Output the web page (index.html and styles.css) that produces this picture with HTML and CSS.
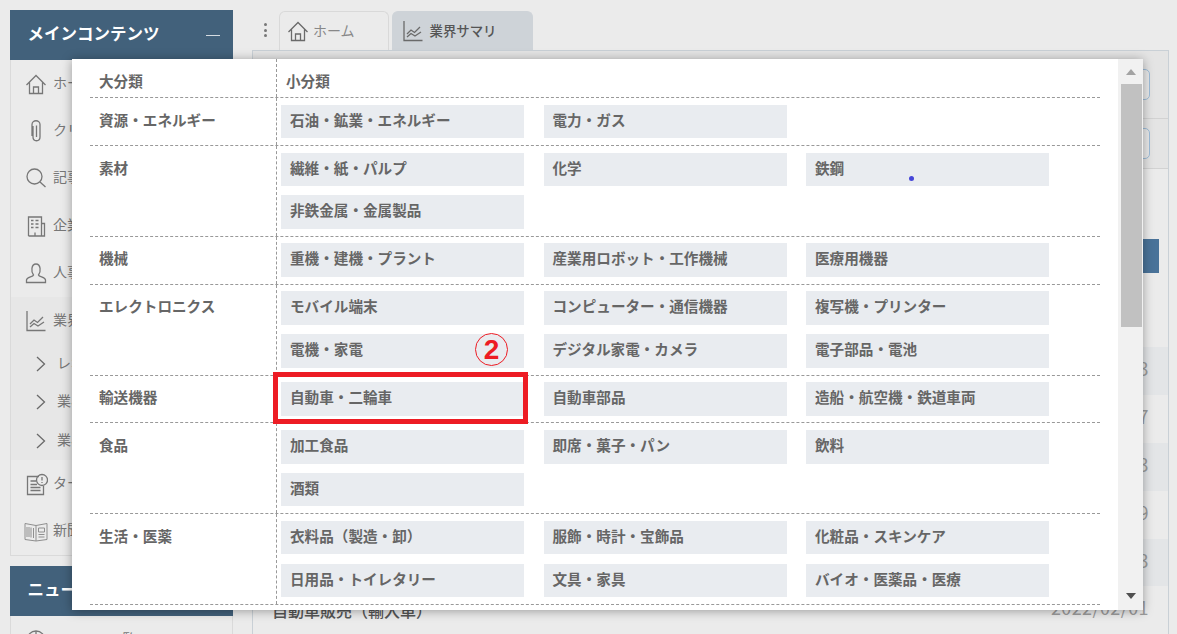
FILE: index.html
```html
<!DOCTYPE html>
<html lang="ja">
<head>
<meta charset="utf-8">
<title>業界サマリ</title>
<link rel="stylesheet" href="styles.css">
</head>
<body>
<div class="page">
  <aside class="sidebar">
    <section class="side-panel">
      <header class="side-head"><span class="title">メインコンテンツ</span><i class="minus"></i></header>
      <nav class="side-nav">
        <a class="item"><svg class="ico" viewBox="0 0 24 24"><path d="M2.500 13 12 3.500 21.500 13M5.500 10.500V21.500H18.500V10.500M9.500 21.500V15H14.500V21.500"/></svg><span class="label">ホーム</span></a>
        <a class="item"><svg class="ico" viewBox="0 0 24 24"><path d="M9 7V18C9 23 16 23 16 18V5.500C16 .5 8 .5 8 5.500V17M12.500 6.500V18"/></svg><span class="label">クリップ</span></a>
        <a class="item"><svg class="ico" viewBox="0 0 24 24"><circle cx="10.500" cy="10.500" r="7.500"/><path d="M16 16 21.500 21"/></svg><span class="label">記事検索</span></a>
        <a class="item"><svg class="ico" viewBox="0 0 24 24"><path d="M4.500 22V3H17.500V22M4.500 22H20.500V9.500H17.500M11 22V18.500M7 6.500H9.500M11.500 6.500H14.500M7 10H9.500M11.500 10H14.500M7 13.500H9.500M11.500 13.500H14.500"/></svg><span class="label">企業情報</span></a>
        <a class="item"><svg class="ico" viewBox="0 0 24 24"><path d="M2.500 21.500H21.500V19C21.500 16 15 16 14.500 14C17 11 17 3 12 3 7 3 7 11 9.500 14 9 16 2.500 16 2.500 19Z"/></svg><span class="label">人事情報</span></a>
        <div class="group">
          <a class="item"><svg class="ico" viewBox="0 0 24 24"><path d="M3 2V21.500H21.500M6 15 10 11 13.500 13.500 19 8M6 18 10 14.500 14 17 20 13"/></svg><span class="label">業界情報</span></a>
          <a class="sub"><svg class="chev" viewBox="0 0 10 16"><path d="M1 1 8.500 8 1 15"/></svg><span class="label">レポート一覧</span></a>
          <a class="sub"><svg class="chev" viewBox="0 0 10 16"><path d="M1 1 8.500 8 1 15"/></svg><span class="label">業界サマリ</span></a>
          <a class="sub"><svg class="chev" viewBox="0 0 10 16"><path d="M1 1 8.500 8 1 15"/></svg><span class="label">業界動向</span></a>
        </div>
        <a class="item"><svg class="ico" viewBox="0 0 24 24"><path d="M15 4.500H3.500V22.500H19.500V14M6.500 9H12M6.500 12.500H13M6.500 15.500H16.500M6.500 18.500H16.500"/><circle cx="18" cy="8" r="5.500"/><path d="M18 5V8.500M18 10V11"/></svg><span class="label">ターゲット</span></a>
        <a class="item"><svg class="ico news" viewBox="0 0 24 24"><path d="M1 4.500 12 6.500 23 4.500V20.500L12 22 1 20.500ZM12 6.500V22M3 8V18M5 8V18M7 8.500V18.500M9.500 9V19M14.500 9H20.500V13H14.500ZM14.500 15.500H20.500M14.500 18H20.500"/></svg><span class="label">新聞</span></a>
      </nav>
    </section>
    <section class="side-panel second">
      <header class="side-head"><span class="title">ニュース</span></header>
      <nav class="side-nav">
        <a class="item low"><svg class="ico" viewBox="0 0 24 24"><circle cx="12" cy="12" r="9"/><path d="M3 12H21M12 3V21"/></svg><span class="label">ニュース一覧</span></a>
      </nav>
    </section>
  </aside>

  <main class="content">
    <div class="tabs">
      <span class="more"><i></i><i></i><i></i></span>
      <a class="tab"><svg class="tab-ico" viewBox="0 0 24 24"><path d="M2.500 13 12 3.500 21.500 13M5.500 10.500V21.500H18.500V10.500M9.500 21.500V15H14.500V21.500"/></svg><span class="tab-label">ホーム</span></a>
      <a class="tab active"><svg class="tab-ico" viewBox="0 0 24 24"><path d="M3 2V21.500H21.500M6 15 10 11 13.500 13.500 19 8M6 18 10 14.500 14 17 20 13"/></svg><span class="tab-label">業界サマリ</span></a>
    </div>
    <div class="panel">
      <div class="filter first"><span class="field"></span></div>
      <div class="filter"><span class="field"></span></div>
      <div class="actions"><span class="button"></span></div>
      <ul class="list">
        <li class="row"><span>自動車販売（国内）</span><time>2022/03/03</time></li>
        <li class="row"><span>自動車生産</span><time>2022/02/27</time></li>
        <li class="row"><span>二輪車販売</span><time>2022/02/23</time></li>
        <li class="row"><span>自動車輸出</span><time>2022/02/19</time></li>
        <li class="row"><span>自動車部品</span><time>2022/02/03</time></li>
        <li class="row"><span>自動車販売（輸入車）</span><time>2022/02/01</time></li>
      </ul>
    </div>
  </main>
</div>

<div class="modal">
  <div class="modal-body">
    <div class="mrow head">
      <div class="major">大分類</div>
      <div class="minor">小分類</div>
    </div>
    <div class="mrow">
      <div class="major">資源・エネルギー</div>
      <div class="chips"><a class="chip">石油・鉱業・エネルギー</a><a class="chip">電力・ガス</a></div>
    </div>
    <div class="mrow">
      <div class="major">素材</div>
      <div class="chips"><a class="chip">繊維・紙・パルプ</a><a class="chip">化学</a><a class="chip">鉄鋼</a><a class="chip">非鉄金属・金属製品</a></div>
    </div>
    <div class="mrow">
      <div class="major">機械</div>
      <div class="chips"><a class="chip">重機・建機・プラント</a><a class="chip">産業用ロボット・工作機械</a><a class="chip">医療用機器</a></div>
    </div>
    <div class="mrow">
      <div class="major">エレクトロニクス</div>
      <div class="chips"><a class="chip">モバイル端末</a><a class="chip">コンピューター・通信機器</a><a class="chip">複写機・プリンター</a><a class="chip">電機・家電</a><a class="chip">デジタル家電・カメラ</a><a class="chip">電子部品・電池</a></div>
    </div>
    <div class="mrow">
      <div class="major">輸送機器</div>
      <div class="chips"><a class="chip">自動車・二輪車</a><a class="chip">自動車部品</a><a class="chip">造船・航空機・鉄道車両</a></div>
    </div>
    <div class="mrow">
      <div class="major">食品</div>
      <div class="chips"><a class="chip">加工食品</a><a class="chip">即席・菓子・パン</a><a class="chip">飲料</a><a class="chip">酒類</a></div>
    </div>
    <div class="mrow">
      <div class="major">生活・医薬</div>
      <div class="chips"><a class="chip">衣料品（製造・卸）</a><a class="chip">服飾・時計・宝飾品</a><a class="chip">化粧品・スキンケア</a><a class="chip">日用品・トイレタリー</a><a class="chip">文具・家具</a><a class="chip">バイオ・医薬品・医療</a></div>
    </div>
  </div>
  <div class="scrollbar">
    <i class="arrow up"></i>
    <i class="thumb"></i>
    <i class="arrow down"></i>
  </div>
</div>

<div class="mark-box"></div>
<div class="mark-num">2</div>
<i class="cursor-dot"></i>
</body>
</html>
```

FILE: styles.css
```css
* { box-sizing: border-box; }
html, body { margin: 0; height: 100%; overflow: hidden; }
body {
  background: #ebebeb;
  font-family: "Noto Sans CJK JP", "Noto Sans", sans-serif;
  color: #777;
  font-size: 14px;
}
a { display: block; }
i { display: block; }
ul { margin: 0; padding: 0; list-style: none; }

.page { display: flex; height: 634px; overflow: hidden; }

/* sidebar */
.sidebar { width: 233px; padding: 10px 0 0 10px; flex: none; }
.side-panel { border-left: 1px solid #dadada; border-bottom: 1px solid #dadada; border-right: 1px solid #dadada; }
.side-panel.second { margin-top: 10px; }
.side-head {
  height: 50px;
  margin: 0 -1px;
  background: #42617b;
  color: #fff;
  font-weight: 700;
  font-size: 16.5px;
  display: flex;
  align-items: center;
  justify-content: space-between;
  padding: 0 13px 0 17.500px;
}
.title { margin-top: -4px; }
.minus { width: 14px; height: 1.5px; background: #d5dce2; margin-top: 1px; }
.item { height: 47.4px; display: flex; align-items: center; padding-left: 13px; gap: 5px; white-space: nowrap; color: #777; }
.item.low { padding-top: 2px; }
.label { margin-top: -4px; }
.group { background: #e7e7e7; }
.sub { height: 38.5px; display: flex; align-items: center; padding-left: 25px; gap: 11px; white-space: nowrap; }
.ico { width: 24px; height: 24px; flex: none; fill: none; stroke: #777; stroke-width: 1.300; }
.ico.news { stroke: #8f8f8f; stroke-width: 1; }
.chev { width: 10px; height: 16px; flex: none; fill: none; stroke: #6a6a6a; stroke-width: 1.300; }

/* main */
.content { flex: 1; min-width: 0; padding: 11px 8px 0 19px; }
.tabs { display: flex; height: 39px; }
.more { width: 27px; display: flex; flex-direction: column; align-items: center; justify-content: center; gap: 2.500px; padding-bottom: 1px; }
.more i { width: 3px; height: 3px; border-radius: 50%; background: #777; }
.tab {
  width: 110px;
  border: 1px solid #d9d9d9;
  border-bottom: 0;
  border-radius: 6px 6px 0 0;
  display: flex;
  align-items: center;
  padding-left: 6px;
  gap: 3px;
  font-size: 14px;
  color: #888;
}
.tab.active {
  width: 141px;
  margin-left: 3px;
  background: #ced3d8;
  border-color: #ced3d8;
  color: #555;
  font-weight: 500;
  font-size: 13.4px;
  gap: 4.500px;
  padding-left: 8px;
}
.tab-label { margin-top: -2px; }
.tab-ico { width: 24px; height: 24px; flex: none; fill: none; stroke: #6a6a6a; stroke-width: 1.300; }
.panel { border: 1px solid #c9d0d6; border-bottom: 0; height: 584px; }
.filter { height: 50.500px; background: #e4e4e4; border-bottom: 1px solid #d2d2d2; display: flex; justify-content: flex-end; padding: 9px 18px 0 0; }
.filter.first { height: 67.500px; padding-top: 18px; }
.field { width: 200px; height: 31px; border: 1px solid #9dbcd8; border-radius: 5px; background: #e8e8e8; }
.actions { height: 178px; padding: 70px 9px 0 0; display: flex; justify-content: flex-end; align-items: flex-start; }
.button { width: 160px; height: 34px; background: #4a7399; }
.row {
  height: 47.900px;
  display: flex;
  align-items: center;
  justify-content: space-between;
  padding: 0 19px;
}
.row:nth-child(odd) { background: #e3e5e7; }
.row:last-child { background: none; }
.row span { font-size: 16px; font-weight: 500; color: #555; }
.row time { font-size: 18px; letter-spacing: .4px; color: #9c9c9c; line-height: 1; margin-top: -6px; }

/* category modal */
.modal {
  position: absolute;
  left: 72px;
  top: 59px;
  width: 1071px;
  height: 551px;
  background: #fff;
  display: flex;
  box-shadow: 0 1px 10px rgba(0, 0, 0, .35);
}
.modal-body { flex: 1; padding: 0 18px; min-width: 0; color: #666; font-weight: 700; font-size: 14.600px; }
.mrow { display: flex; border-bottom: 1px dashed #999; }
.mrow.head { height: 39px; }
.major { width: 187px; flex: none; padding: 6.600px 0 0 9px; border-right: 1px dashed #999; line-height: 29.600px; white-space: nowrap; }
.minor { padding: 6.600px 0 0 9px; line-height: 29.600px; }
.chips { display: grid; grid-template-columns: repeat(3, 243px); column-gap: 19.500px; row-gap: 9.200px; padding: 6.600px 0 6.800px 4px; }
.chip { height: 33.600px; line-height: 29px; padding-left: 9px; background: #e9ecf0; white-space: nowrap; }

.scrollbar { width: 25px; flex: none; background: #f1f1f1; display: flex; flex-direction: column; align-items: center; padding: 10px 0 0 1px; }
.arrow { width: 0; height: 0; border-left: 5.500px solid transparent; border-right: 5.500px solid transparent; }
.arrow.up { border-bottom: 6px solid #a3a3a3; }
.arrow.down { border-top: 6px solid #505050; margin-top: 266px; }
.thumb { width: 21px; height: 243px; background: #c1c1c1; margin-top: 9px; }

/* annotations over the screenshot */
.mark-box { position: absolute; left: 273px; top: 372px; width: 255px; height: 52px; border: 5px solid #ed1c24; }
.mark-num {
  position: absolute;
  left: 475px;
  top: 333px;
  width: 33px;
  height: 33px;
  border: 1px solid #ed1c24;
  border-radius: 50%;
  color: #ed1c24;
  font: 700 28px/31px "Liberation Sans", sans-serif;
  text-align: center;
}
.cursor-dot { position: absolute; left: 908.500px; top: 175.500px; width: 5px; height: 5px; border-radius: 50%; background: #4646d8; }
```
